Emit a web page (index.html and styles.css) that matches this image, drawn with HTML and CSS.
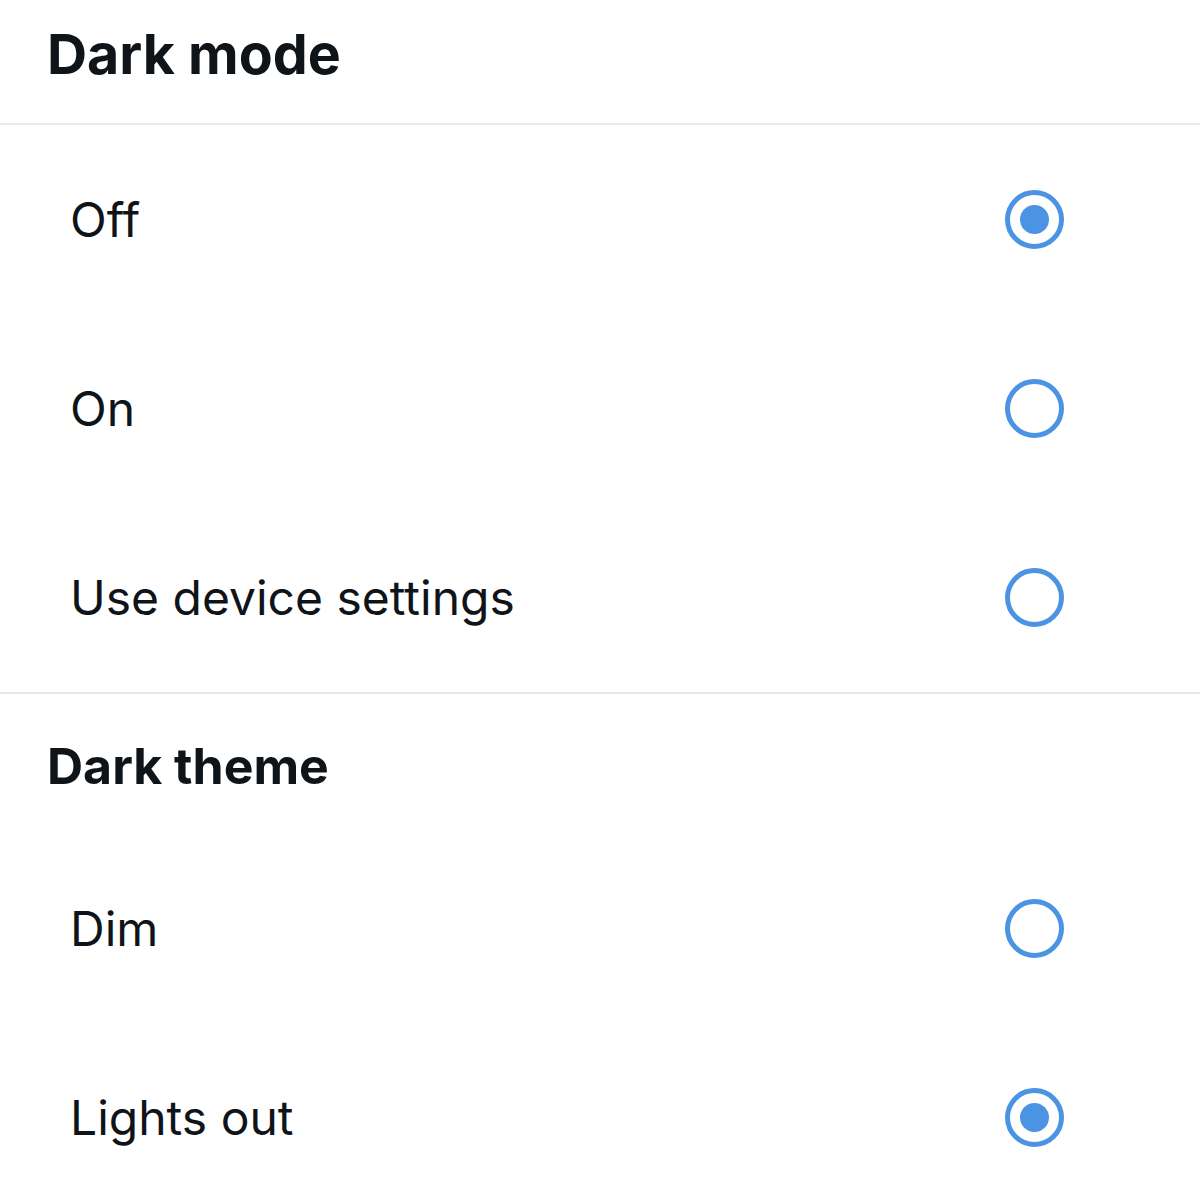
FILE: index.html
```html
<!DOCTYPE html>
<html lang="en">
<head>
    <meta charset="UTF-8">
    <meta name="viewport" content="width=device-width, initial-scale=1.0">
    <title>Display</title>
    <link rel="stylesheet" href="styles.css">
</head>
<body>
    <header class="title">
        <h1>Dark mode</h1>
    </header>

    <section class="group">
        <label class="option">
            <span>Off</span>
            <span class="radio checked"></span>
        </label>
        <label class="option">
            <span>On</span>
            <span class="radio"></span>
        </label>
        <label class="option">
            <span>Use device settings</span>
            <span class="radio"></span>
        </label>
    </section>

    <section class="group last">
        <h2 class="subtitle">Dark theme</h2>
        <label class="option">
            <span>Dim</span>
            <span class="radio"></span>
        </label>
        <label class="option">
            <span>Lights out</span>
            <span class="radio checked"></span>
        </label>
    </section>
</body>
</html>
```

FILE: styles.css
```css
body {
    margin: 0;
    background-color: #ffffff;
    color: #0f1419;
    font-family: "Inter", "Noto Sans", sans-serif;
    overflow: hidden;
}
.title {
    height: 125px;
    display: flex;
    align-items: center;
    padding: 0 47px 16px;
    box-sizing: border-box;
    border-bottom: 2px solid #e6e8ea;
}
.title h1 {
    margin: 0;
    font-size: 55.5px;
    font-weight: 700;
}
.group {
    border-bottom: 2px solid #e6e8ea;
}
.group.last {
    border-bottom: none;
}
.subtitle {
    margin: 0;
    height: 140px;
    box-sizing: border-box;
    display: flex;
    align-items: center;
    padding: 4px 47px 0;
    font-size: 50px;
    font-weight: 700;
}
.option {
    height: 189px;
    display: flex;
    align-items: center;
    justify-content: space-between;
    padding: 0 136px 0 70px;
    font-size: 48px;
}
.radio {
    width: 49px;
    height: 49px;
    border: 5px solid #4a94e3;
    border-radius: 50%;
    display: flex;
    align-items: center;
    justify-content: center;
}
.radio.checked::after {
    content: "";
    width: 29px;
    height: 29px;
    border-radius: 50%;
    background-color: #4a94e3;
}
```
